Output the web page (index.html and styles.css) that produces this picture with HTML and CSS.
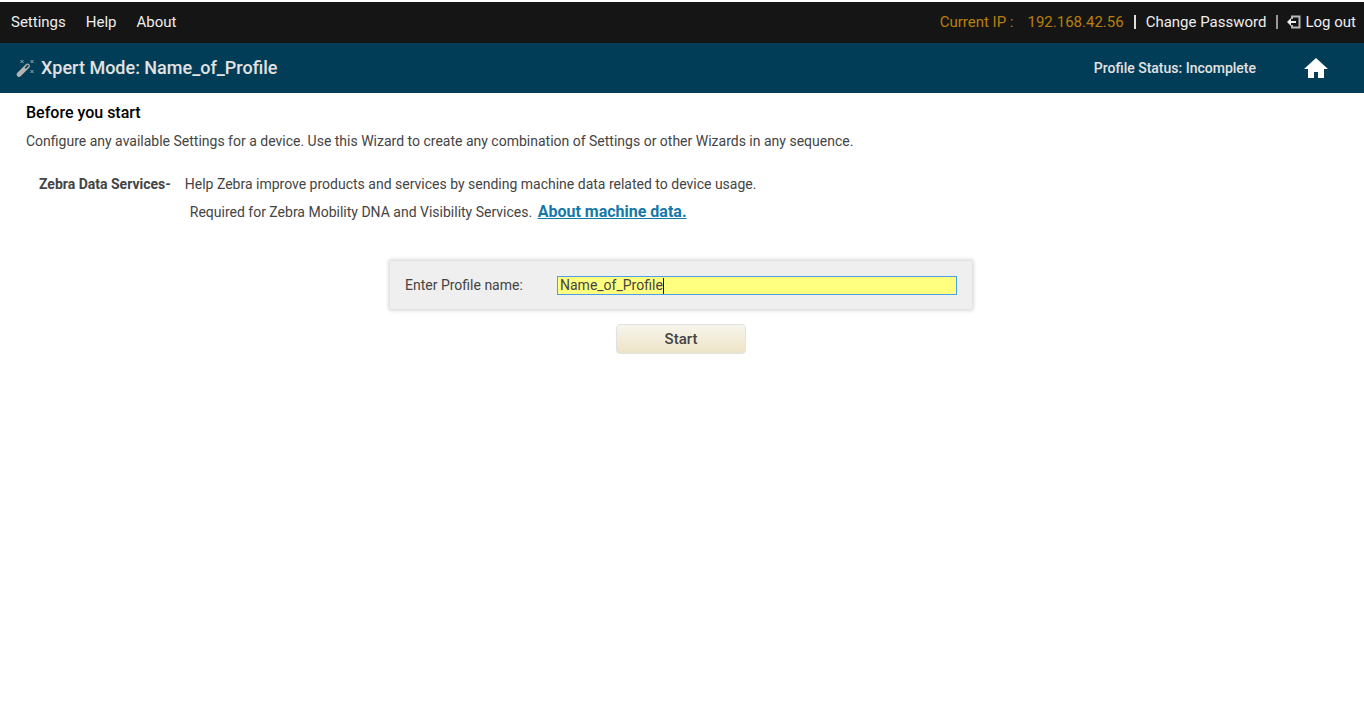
FILE: index.html
```html
<!DOCTYPE html>
<html lang="en">
<head>
<meta charset="utf-8">
<title>Xpert Mode</title>
<link rel="stylesheet" href="styles.css">
</head>
<body>
<nav class="topbar">
  <div class="menu">
    <a href="#">Settings</a>
    <a href="#">Help</a>
    <a href="#">About</a>
  </div>
  <div class="account">
    <span class="ip-label">Current IP :</span>
    <span class="ip">192.168.42.56</span>
    <span class="divider divider-bright"></span>
    <a href="#">Change Password</a>
    <span class="divider"></span>
    <a class="logout" href="#">
      <svg class="logout-icon" viewBox="0 0 14 14" aria-hidden="true"><path d="M5 4V1.500h7.500v11H5V10" fill="none" stroke="#b8b8b8" stroke-width="2"/><path d="M0 7l4-4v3h5v2H4v3z" fill="#eee"/></svg>
      Log out
    </a>
  </div>
</nav>
<header class="titlebar">
  <svg class="wand-icon" viewBox="0 0 18 18" aria-hidden="true">
    <path d="M3 15.500L11.500 7" stroke="#b4b4b4" stroke-width="4.600" stroke-linecap="round"/>
    <path d="M9.800 8.700L11.800 6.700" stroke="#023d57" stroke-width="1.800" stroke-linecap="round"/>
    <path d="M4.500 1l3 3m0-3l-3 3M14.500 1l3 3m0-3l-3 3M14.500 11l3 3m0-3l-3 3" stroke="#9aabb3" stroke-width="1"/>
  </svg>
  <h1 class="title">Xpert Mode: Name_of_Profile</h1>
  <span class="status">Profile Status: Incomplete</span>
  <a class="home" href="#" aria-label="Home"><svg class="home-icon" viewBox="0 0 24 20" aria-hidden="true"><path d="M12 0L0 11h4v9h6v-6h4v6h6v-9h4z" fill="#fff"/></svg></a>
</header>
<main class="content">
  <h2 class="heading">Before you start</h2>
  <p class="intro">Configure any available Settings for a device. Use this Wizard to create any combination of Settings or other Wizards in any sequence.</p>
  <section class="services">
    <strong class="services-name">Zebra Data Services-</strong>
    <div class="services-text">
      <p class="line">Help Zebra improve products and services by sending machine data related to device usage.</p>
      <p class="line line-indent">Required for Zebra Mobility DNA and Visibility Services. <a class="about-link" href="#">About machine data.</a></p>
    </div>
  </section>
  <form class="profile-form">
    <div class="panel">
      <label class="label" for="profile">Enter Profile name:</label>
      <div class="field">
        <input class="input" id="profile" type="text" value="Name_of_Profile">
        <span class="caret"></span>
      </div>
    </div>
    <button class="start" type="button">Start</button>
  </form>
</main>
</body>
</html>
```
FILE: styles.css
```css
* { box-sizing: border-box; }
body {
  margin: 0;
  padding-top: 2px;
  background: #fff;
  color: #444;
  font: 14px/20px Roboto, "Liberation Sans", sans-serif;
}
h1, h2, p { margin: 0; }
.topbar {
  display: flex;
  justify-content: space-between;
  align-items: center;
  height: 41px;
  padding: 0 8px 2px 11px;
  background: #151515;
  font-size: 15px;
}
.topbar a { color: #eee; text-decoration: none; }
.menu { display: flex; gap: 20px; }
.account { display: flex; align-items: center; gap: 10px; }
.ip-label, .ip { color: #b8800b; }
.ip-label { margin-right: 4px; }
.divider { width: 2px; height: 14px; background: #999; }
.divider-bright { background: #ddd; }
.logout { display: flex; align-items: center; gap: 4px; margin-left: -1px; }
.logout-icon { width: 14px; height: 14px; }
.titlebar {
  display: flex;
  align-items: center;
  height: 50px;
  padding: 0 36px 0 16px;
  background: #023d57;
  color: #e2e2e2;
}
.wand-icon { width: 18px; height: 18px; margin-right: 7px; }
.title { flex: 1; font-size: 18px; font-weight: 500; }
.status { font-weight: 500; margin-right: 48px; }
.home { display: flex; }
.home-icon { width: 24px; height: 20px; }
.content { padding: 10px 28px 10px 26px; }
.heading { color: #000; font-size: 16px; font-weight: 500; }
.intro { margin-top: 8px; }
.services { display: flex; gap: 14px; margin: 19px 0 0 13px; line-height: 28px; }
.line-indent { padding-left: 5px; }
.about-link { margin-left: 2px; color: #1678a8; font-size: 16px; font-weight: 700; }
.profile-form { display: flex; flex-direction: column; align-items: center; gap: 14px; margin-top: 34px; }
.panel {
  display: flex;
  align-items: center;
  width: 584px;
  max-width: 100%;
  padding: 14px 15px;
  background: #efefef;
  border: 1px solid #e3e3e3;
  box-shadow: 0 0 4px #ccc;
}
.label { flex: 1; }
.field { position: relative; width: 400px; }
.input {
  display: block;
  width: 100%;
  height: 19px;
  padding: 0 2px;
  border: 1px solid #4c9fe6;
  outline: 0;
  background: #ffff80;
  color: #444;
  font: inherit;
}
.caret { position: absolute; top: 2px; left: 106px; width: 1px; height: 16px; background: #000080; }
.start {
  width: 130px;
  height: 30px;
  padding: 0;
  border: 1px solid #e2e2e2;
  border-radius: 4px;
  background: linear-gradient(#f7f5ec, #ede4c6);
  color: #444;
  font: 500 15px/20px Roboto, sans-serif;
}
```
